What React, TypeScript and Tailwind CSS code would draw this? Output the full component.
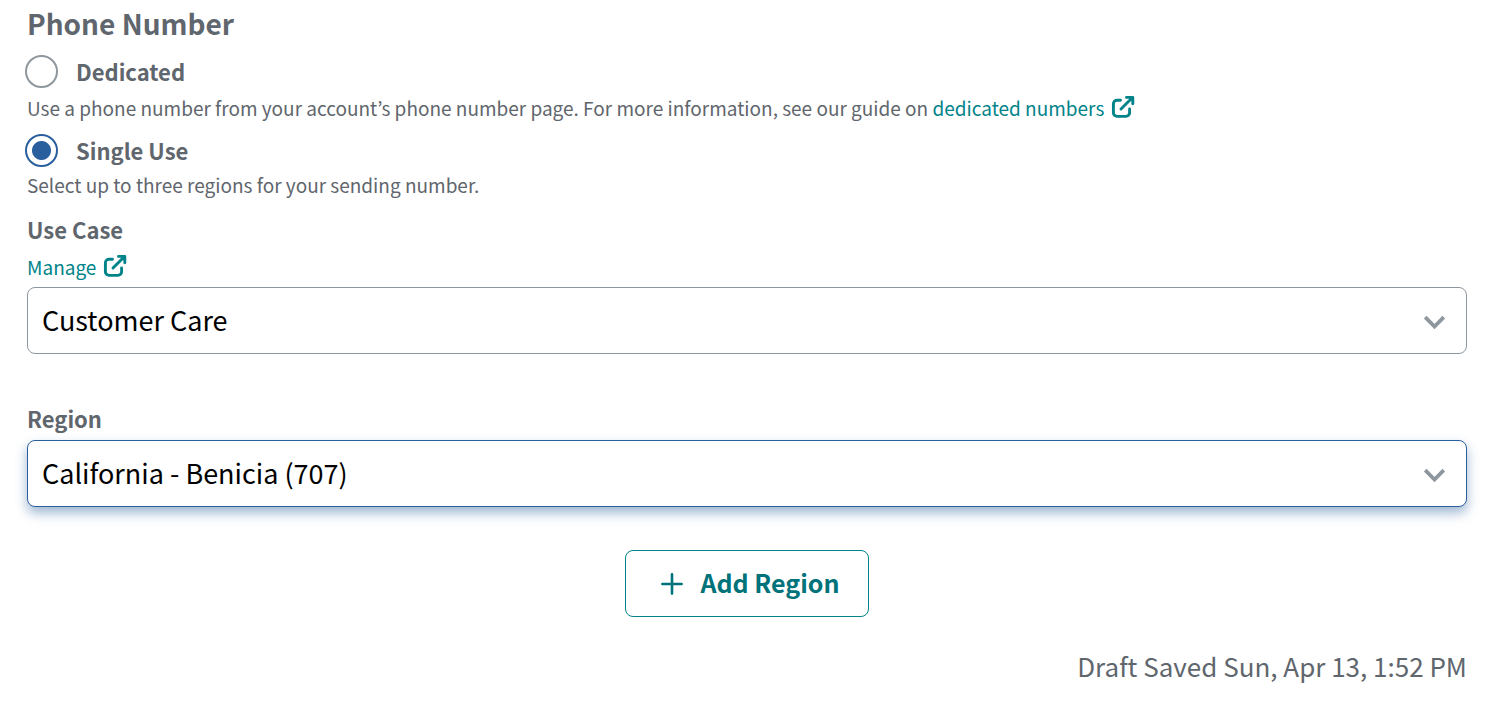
import { useState } from 'react'
import type { ReactNode } from 'react'

type NumberType = 'dedicated' | 'single'

const USE_CASES = ['Customer Care', 'Marketing', 'Account Notifications']
const REGIONS = ['California - Benicia (707)', 'California - Oakland (510)', 'Nevada - Reno (775)']

function ExternalIcon() {
  return (
    <svg
      className="ml-0.5 inline-block size-6 align-[-3px]"
      viewBox="0 0 24 24"
      fill="none"
      stroke="currentColor"
      strokeWidth="2.9"
      strokeLinecap="round"
      aria-hidden="true"
    >
      <path d="M9.5 5.2H6a3.6 3.6 0 0 0-3.6 3.6v9A3.6 3.6 0 0 0 6 21.4h9a3.6 3.6 0 0 0 3.6-3.6V14" />
      <path d="M10 14 20 4" />
      <path d="M15.5 2.4h6.3v6.3" strokeLinejoin="round" />
      <path d="M17 2.4h5v5z" fill="currentColor" stroke="none" />
    </svg>
  )
}

interface RadioRowProps {
  label: string
  checked: boolean
  onSelect: () => void
}

function RadioRow({ label, checked, onSelect }: RadioRowProps) {
  return (
    <label className="-ml-0.5 flex w-fit items-center gap-4.5 text-[22px] leading-7 font-bold">
      <input
        type="radio"
        name="number-type"
        checked={checked}
        onChange={onSelect}
        className="size-[33px] appearance-none rounded-full border-2 border-[#8f979e] bg-white checked:border-[#2a5f9e] checked:bg-[radial-gradient(circle,#2a5f9e_9px,transparent_10px)]"
      />
      <span className="pb-0.5">{label}</span>
    </label>
  )
}

interface SelectBoxProps {
  id: string
  options: string[]
  className: string
}

function SelectBox({ id, options, className }: SelectBoxProps) {
  return (
    <div className="relative">
      <select
        id={id}
        className={`block h-[67px] w-full appearance-none rounded-lg border bg-white pr-16 pl-3.5 text-[27px] text-black outline-none ${className}`}
      >
        {options.map((o) => (
          <option key={o}>{o}</option>
        ))}
      </select>
      <svg
        className="pointer-events-none absolute top-7 right-5 h-4 w-6"
        viewBox="0 0 24 16"
        fill="none"
        stroke="#8f979e"
        strokeWidth="3.8"
        aria-hidden="true"
      >
        <path d="M2.2 2.2 11.5 11.5 20.8 2.2" />
      </svg>
    </div>
  )
}

function TextLink({ children }: { children: ReactNode }) {
  return (
    <a href="#" className="text-[#00848a] hover:underline">
      {children} <ExternalIcon />
    </a>
  )
}

export default function App() {
  const [numberType, setNumberType] = useState<NumberType>('single')

  return (
    <main className="flex flex-col bg-white pt-[7px] pr-[31px] pb-8 pl-[27px] font-['Noto_Sans_CJK_JP','Noto_Sans',sans-serif] text-[#5f666d]">
      <fieldset>
        <legend className="text-[28px] leading-8 font-bold">Phone Number</legend>

        <div className="pt-4">
          <RadioRow
            label="Dedicated"
            checked={numberType === 'dedicated'}
            onSelect={() => setNumberType('dedicated')}
          />
          <p className="mt-1.5 text-[19px] leading-7">
            Use a phone number from your account’s phone number page. For more information, see our
            guide on <TextLink>dedicated numbers</TextLink>
          </p>
        </div>

        <div className="pt-3">
          <RadioRow
            label="Single Use"
            checked={numberType === 'single'}
            onSelect={() => setNumberType('single')}
          />
          <p className="mt-1 text-[19px] leading-7">
            Select up to three regions for your sending number.
          </p>
        </div>
      </fieldset>

      {/* Use case */}
      <div className="mt-3.5 flex flex-col">
        <label htmlFor="use-case" className="text-[22px] leading-8 font-bold">
          Use Case
        </label>
        <p className="mt-2 mb-1.5 text-[19px] leading-7">
          <TextLink>Manage</TextLink>
        </p>
        <SelectBox id="use-case" options={USE_CASES} className="border-[#8f979e]" />
      </div>

      {/* Region */}
      <div className="mt-12 flex flex-col">
        <label htmlFor="region" className="mb-1.5 text-[22px] leading-8 font-bold">
          Region
        </label>
        <SelectBox
          id="region"
          options={REGIONS}
          className="border-[#2a5f9e] shadow-[0_6px_12px_rgba(42,95,158,0.45)]"
        />
      </div>

      <button
        type="button"
        className="mt-[43px] flex h-[67px] items-center gap-4 self-center rounded-lg border border-[#00848a] bg-white px-8 text-[25px] font-bold text-[#00727a]"
      >
        <svg
          className="ml-0.5 size-6"
          viewBox="0 0 24 24"
          fill="none"
          stroke="currentColor"
          strokeWidth="2.6"
          strokeLinecap="round"
          aria-hidden="true"
        >
          <path d="M12 2.4v19.2M2.4 12h19.2" />
        </svg>
        <span className="-mr-1 pb-0.5">Add Region</span>
      </button>

      <p className="mt-[31px] text-right text-[26px] leading-9">Draft Saved Sun, Apr 13, 1:52 PM</p>
    </main>
  )
}
